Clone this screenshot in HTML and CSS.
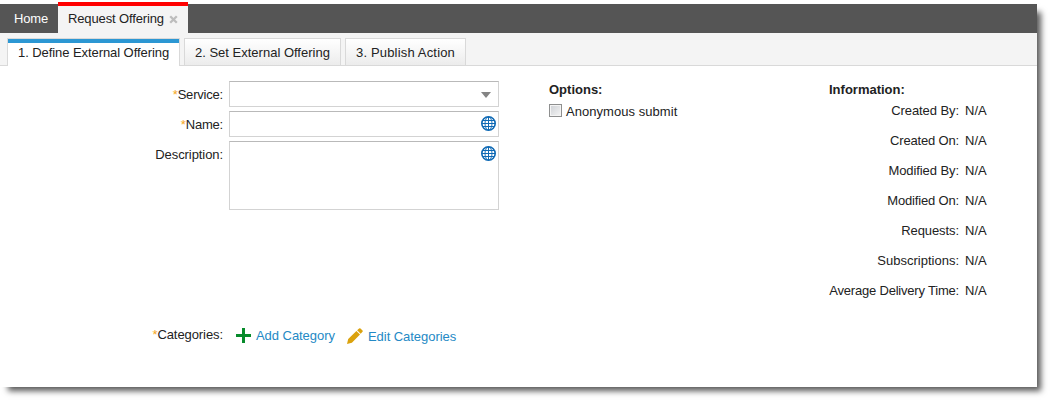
FILE: index.html
```html
<!DOCTYPE html>
<html lang="en">
<head>
<meta charset="utf-8">
<title>Request Offering</title>
<link rel="stylesheet" href="styles.css">
</head>
<body>
<svg class="defs" width="0" height="0" aria-hidden="true">
  <symbol id="globe" viewBox="0 0 15 15">
    <circle cx="7.5" cy="7.5" r="6.7" fill="#fff" stroke="#0f6ab5" stroke-width="1.6"/>
    <path d="M1 7.5h13M7.5 1v13M2 4.5h11M2 10.5h11" fill="none" stroke="#0f6ab5" stroke-width="1"/>
    <ellipse cx="7.5" cy="7.5" rx="3.5" ry="6.5" fill="none" stroke="#0f6ab5" stroke-width=".9"/>
  </symbol>
</svg>
<div class="window">
  <header class="topbar">
    <a class="home">Home</a>
    <div class="page-tab"><span class="page-title">Request Offering</span>
      <svg class="close" width="9" height="9" viewBox="0 0 9 9"><path d="M1.2 1.2l6.6 6.6M7.8 1.2L1.2 7.8" stroke="#bdbdbd" stroke-width="2.3"/></svg>
    </div>
  </header>
  <nav class="steps">
    <a class="step active"><span class="t1">1. Define External Offering</span></a>
    <a class="step s2"><span class="t2">2. Set External Offering</span></a>
    <a class="step s3"><span class="t3">3. Publish Action</span></a>
  </nav>
  <main class="content">
    <section class="form">
      <div class="row"><label class="narrow"><i>*</i>Service:</label><div class="field"><svg class="arrow" width="10" height="6" viewBox="0 0 10 6"><path d="M0 0h10L5 6z" fill="#848484"/></svg></div></div>
      <div class="row"><label class="narrow"><i>*</i>Name:</label><div class="field"><svg class="globe" width="15" height="15"><use href="#globe"/></svg></div></div>
      <div class="row description"><label>Description:</label><div class="field"><svg class="globe" width="15" height="15"><use href="#globe"/></svg></div></div>
      <div class="row categories"><label><i>*</i>Categories:</label>
        <a class="link add"><svg width="15" height="15" viewBox="0 0 15 15"><path d="M6 0h3v6h6v3H9v6H6V9H0V6h6z" fill="#078b2b"/></svg><span>Add Category</span></a>
        <a class="link edit"><svg width="16" height="16" viewBox="0 0 16 16"><path d="M0 16l1.2-5 8.2-8 3.6 3.6-8.1 8.1zM10.1 2.3L12.1.5q.7-.6 1.4 0l2 2q.6.7 0 1.3l-1.8 2z" fill="#dba20d"/></svg><span>Edit Categories</span></a>
      </div>
    </section>
    <section class="options">
      <h2>Options:</h2>
      <label class="check"><span class="box"></span><span class="anonymous">Anonymous submit</span></label>
    </section>
    <section class="info">
      <h2>Information:</h2>
      <dl>
        <dt>Created By:</dt><dd>N/A</dd>
        <dt class="on">Created On:</dt><dd>N/A</dd>
        <dt>Modified By:</dt><dd>N/A</dd>
        <dt class="on">Modified On:</dt><dd>N/A</dd>
        <dt>Requests:</dt><dd>N/A</dd>
        <dt class="subs">Subscriptions:</dt><dd>N/A</dd>
        <dt class="delivery">Average Delivery Time:</dt><dd>N/A</dd>
      </dl>
    </section>
  </main>
</div>
</body>
</html>
```
FILE: styles.css
```css
* { box-sizing: border-box; }
html { height: 402px; }
body { height: 402px; margin: 0; padding-top: 4px; background: #fff; color: #222; font: 13px/16px "Liberation Sans", Arial, sans-serif; overflow: hidden; }
.defs { display: block; height: 0; }
.window { width: 1037px; height: 383px; background: #fff; box-shadow: 6px 6px 6px -2px rgba(0,0,0,.65); }
.topbar { display: flex; height: 29px; background: #555; }
.home { width: 58px; padding: 7px 0 0 14px; color: #fff; letter-spacing: -.15px; }
.page-tab { display: flex; width: 130px; height: 31px; margin-top: -2px; padding: 5px 0 0 10px; border-top: 4px solid #f00; background: #f4f4f4; }
.page-title { width: 101px; white-space: nowrap; letter-spacing: -.13px; }
.close { margin-top: 4px; }
.steps { display: flex; gap: 4px; height: 33px; padding: 5px 0 0 7px; background: #f4f4f4; border-bottom: 1px solid #d9d9d9; }
.step { height: 27px; padding: 6px 0 0 10px; border: 1px solid #d9d9d9; border-bottom: 0; background: linear-gradient(#fff, #ececec); white-space: nowrap; }
.step.active { width: 173px; height: 28px; background: #fff; padding-top: 2px; }
.step.active::before { content: ""; display: block; height: 4px; margin: -2px 0 0 -10px; background: #2c97d3; }
.t1 { display: block; padding-top: 2px; letter-spacing: -.07px; }
.t3 { letter-spacing: .17px; }
.s2 { width: 157px; }
.s3 { width: 121px; }
.content { display: flex; padding-top: 15px; }
.form { width: 549px; }
.row { display: flex; height: 26px; margin-bottom: 4px; }
.row label { width: 223px; margin-right: 6px; padding-top: 6px; text-align: right; letter-spacing: -.08px; }
.row label.narrow { letter-spacing: -.2px; }
.row i { color: #f5a623; font-style: normal; }
.field { display: flex; justify-content: flex-end; width: 270px; border: 1px solid #d3d3d3; border-top-color: #b9b9b9; background: #fff; }
.arrow { margin: 10px 7px 0 0; }
.globe { margin: 4px 2px 0 0; }
.row.description { height: 69px; margin-bottom: 111px; }
.row.categories { margin: 0; }
.link { display: flex; color: #2489c5; white-space: nowrap; letter-spacing: -.05px; }
.add { width: 111px; padding: 7px 0 0 7px; gap: 5px; }
.edit { padding: 8px 0 0 7px; gap: 5px; }
.edit svg { margin-top: -1px; }
h2 { margin: 0; font-size: 13px; line-height: 16px; }
.options { width: 280px; padding-top: 1px; }
.check { display: flex; gap: 4px; margin-top: 6px; }
.anonymous { letter-spacing: .05px; }
.box { width: 13px; height: 13px; border: 1px solid #8e8f8f; background: linear-gradient(135deg, #cdd0d5, #f5f5f5); box-shadow: inset 0 0 0 1px #f4f4f4; }
.info { width: 170px; padding-top: 1px; }
dl { display: grid; grid-template-columns: 130px auto; grid-auto-rows: 30px; column-gap: 6px; margin: 5px 0 0; white-space: nowrap; }
dt { text-align: right; letter-spacing: -.08px; }
.on { letter-spacing: -.17px; }
.subs { letter-spacing: 0; }
.delivery { letter-spacing: -.2px; }
dd { margin: 0; }
```
